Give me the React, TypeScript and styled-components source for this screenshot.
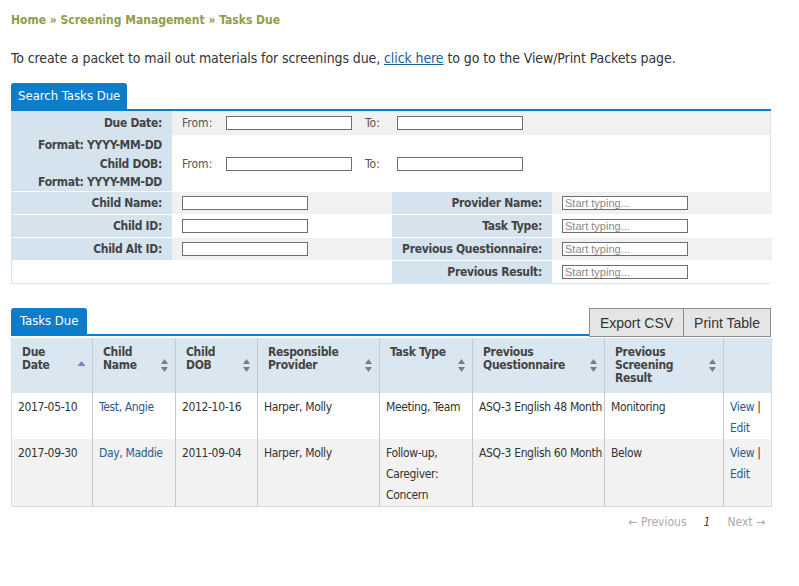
import React from "react";
import styled, { createGlobalStyle } from "styled-components";

const FONT = `Tahoma, "DejaVu Sans Condensed", "DejaVu Sans", sans-serif`;

const Global = createGlobalStyle`
  html, body { margin: 0; padding: 0; background: #fff; }
  body { font-family: ${FONT}; color: #333; }
  * { box-sizing: border-box; }
`;

const Page = styled.div`
  width: 799px;
  padding: 12px 28px 30px 11px;
`;

const Breadcrumb = styled.div`
  font-size: 12px;
  font-weight: bold;
  color: #8e9e48;
  height: 16px;
  line-height: 16px;
`;

const Intro = styled.p`
  margin: 21px 0 0;
  font-size: 14px;
  line-height: 18px;
  color: #333;
  letter-spacing: -0.1px;
`;

const Link = styled.a`
  color: #1f5c99;
  text-decoration: underline;
  cursor: pointer;
`;

const TabRow = styled.div<{ $top: number }>`
  display: flex;
  align-items: flex-start;
  width: 760px;
  margin-top: ${(p) => p.$top}px;
`;

const TabLine = styled.div`
  flex: 1;
  height: 28px;
  border-bottom: 2px solid #0b7dcb;
  display: flex;
`;

const Tab = styled.div<{ $pad: number }>`
  height: 26px;
  line-height: 26px;
  padding: 0 ${(p) => p.$pad}px;
  background: #0b7dcb;
  color: #fff;
  font-size: 13px;
  border-radius: 3px 3px 0 0;
`;

const Search = styled.div`
  border: 1px solid #d8e4ec;
  border-top: none;
  width: 760px;
`;

const DateBlock = styled.div`
  display: grid;
  grid-template-columns: 160px 1fr;
`;

const LabelStack = styled.div`
  background: #d5e3ee;
  display: grid;
  grid-template-rows: 24px 19px 19px 18px;
`;

const Label = styled.div<{ $blank?: boolean }>`
  font-size: 12px;
  font-weight: bold;
  color: #444;
  letter-spacing: -0.3px;
  text-align: right;
  padding-right: 10px;
  display: flex;
  align-items: center;
  justify-content: flex-end;
  background: ${(p) => (p.$blank ? "#fff" : "#d5e3ee")};
`;

const DateStack = styled.div`
  display: grid;
  grid-template-rows: 24px 19px 19px 18px;
`;

const DateLine = styled.div<{ $shade?: boolean }>`
  display: flex;
  align-items: center;
  padding-left: 10px;
  font-size: 12px;
  color: #555;
  background: ${(p) => (p.$shade ? "#f1f1f1" : "#fff")};
`;

const FromLabel = styled.span`
  width: 44px;
`;

const ToLabel = styled.span`
  width: 32px;
  margin-left: 13px;
`;

const TextBox = styled.input`
  width: 126px;
  height: 14px;
  border: 1px solid #6e6e6e;
  padding: 0 2px;
  margin: 0;
  background: #fff;
  font-family: "Liberation Sans", Arial, sans-serif;
  font-size: 11px;
  color: #333;
  outline: none;
  &::placeholder { color: #8a8a8a; }
`;

const FieldRow = styled.div`
  display: grid;
  grid-template-columns: 160px 220px 160px 220px;
  height: 23px;
  border-top: 1px solid #fff;
`;

const FieldCell = styled.div<{ $shade?: boolean }>`
  display: flex;
  align-items: center;
  padding-left: 10px;
  background: ${(p) => (p.$shade ? "#f1f1f1" : "#fff")};
`;

const ToolButtons = styled.div`
  display: flex;
  height: 29px;
`;

const ToolButton = styled.button`
  height: 29px;
  padding: 0 10px;
  background: #e5e5e5;
  border: 1px solid #8c8c8c;
  font-family: "Liberation Sans", Arial, sans-serif;
  font-size: 14px;
  color: #333;
  & + & { border-left: none; }
`;

const Table = styled.table`
  width: 760px;
  border-collapse: collapse;
  table-layout: fixed;
  border: 1px solid #dcdcdc;
  border-top: none;
  margin-top: 1px;
`;

const Th = styled.th<{ $w: number }>`
  width: ${(p) => p.$w}px;
  height: 55px;
  background: #dae7f1;
  text-align: left;
  vertical-align: top;
  padding: 8px 20px 0 10px;
  font-size: 12px;
  line-height: 13px;
  font-weight: bold;
  letter-spacing: -0.3px;
  color: #444;
  border-left: 1px solid #c9c9c9;
  position: relative;
  &:first-child { border-left: none; }
`;

const SortIcon = styled.svg`
  position: absolute;
  right: 6px;
  top: 20px;
`;

const Tr = styled.tr<{ $shade?: boolean }>`
  background: ${(p) => (p.$shade ? "#f2f2f2" : "#fff")};
`;

const Td = styled.td`
  vertical-align: top;
  padding: 4px 4px 0 6px;
  font-size: 12px;
  line-height: 21px;
  letter-spacing: -0.35px;
  white-space: nowrap;
  color: #333;
  border-left: 1px solid #c9c9c9;
  &:first-child { border-left: none; }
`;

const CellLink = styled.a`
  color: #2a5b8c;
  text-decoration: none;
  cursor: pointer;
`;

const Pager = styled.div`
  display: flex;
  justify-content: flex-end;
  align-items: center;
  gap: 17px;
  width: 760px;
  margin-top: 8px;
  padding-right: 6px;
  font-size: 12px;
  color: #aaa;
`;

const PageNum = styled.span`
  font-style: italic;
  color: #444;
`;

const Sort = ({ active }: { active?: boolean }) =>
  active ? (
    <SortIcon width="9" height="15" viewBox="0 0 9 15">
      <path d="M4.5 3 L8.5 8 L0.5 8 Z" fill="#8080d0" />
    </SortIcon>
  ) : (
    <SortIcon width="9" height="15" viewBox="0 0 9 15">
      <path d="M4.5 1 L8 6 L1 6 Z" fill="#7d7d7d" />
      <path d="M4.5 14 L8 9 L1 9 Z" fill="#7d7d7d" />
    </SortIcon>
  );

const columns: { w: number; label: React.ReactNode; active?: boolean; sort?: boolean }[] = [
  { w: 81, label: <>Due<br />Date</>, active: true, sort: true },
  { w: 83, label: <>Child<br />Name</>, sort: true },
  { w: 82, label: <>Child<br />DOB</>, sort: true },
  { w: 122, label: <>Responsible<br />Provider</>, sort: true },
  { w: 93, label: <>Task Type</>, sort: true },
  { w: 132, label: <>Previous<br />Questionnaire</>, sort: true },
  { w: 119, label: <>Previous<br />Screening<br />Result</>, sort: true },
  { w: 48, label: null },
];

const rows = [
  {
    due: "2017-05-10",
    name: "Test, Angie",
    dob: "2012-10-16",
    provider: "Harper, Molly",
    task: <>Meeting, Team</>,
    q: "ASQ-3 English 48 Month",
    result: "Monitoring",
  },
  {
    due: "2017-09-30",
    name: "Day, Maddie",
    dob: "2011-09-04",
    provider: "Harper, Molly",
    task: <>Follow-up,<br />Caregiver:<br />Concern</>,
    q: "ASQ-3 English 60 Month",
    result: "Below",
  },
];

const fieldRows = [
  { l: "Child Name:", r: "Provider Name:", shade: true },
  { l: "Child ID:", r: "Task Type:", shade: false },
  { l: "Child Alt ID:", r: "Previous Questionnaire:", shade: true },
  { l: null, r: "Previous Result:", shade: false },
];

export default function App() {
  return (
    <Page>
      <Global />
      <Breadcrumb>Home » Screening Management » Tasks Due</Breadcrumb>
      <Intro>
        To create a packet to mail out materials for screenings due, <Link>click here</Link> to go to the
        View/Print Packets page.
      </Intro>

      <TabRow $top={16}>
        <TabLine>
          <Tab $pad={7}>Search Tasks Due</Tab>
        </TabLine>
      </TabRow>
      <Search>
        <DateBlock>
          <LabelStack>
            <Label>Due Date:</Label>
            <Label>Format: YYYY-MM-DD</Label>
            <Label>Child DOB:</Label>
            <Label>Format: YYYY-MM-DD</Label>
          </LabelStack>
          <DateStack>
            <DateLine $shade>
              <FromLabel>From:</FromLabel>
              <TextBox />
              <ToLabel>To:</ToLabel>
              <TextBox />
            </DateLine>
            <DateLine />
            <DateLine>
              <FromLabel>From:</FromLabel>
              <TextBox />
              <ToLabel>To:</ToLabel>
              <TextBox />
            </DateLine>
            <DateLine />
          </DateStack>
        </DateBlock>
        {fieldRows.map((f, i) => (
          <FieldRow key={i}>
            <Label $blank={!f.l}>{f.l}</Label>
            <FieldCell $shade={f.shade}>{f.l && <TextBox />}</FieldCell>
            <Label>{f.r}</Label>
            <FieldCell $shade={f.shade}>
              <TextBox placeholder="Start typing..." />
            </FieldCell>
          </FieldRow>
        ))}
      </Search>

      <TabRow $top={24}>
        <TabLine>
          <Tab $pad={9}>Tasks Due</Tab>
        </TabLine>
        <ToolButtons>
          <ToolButton>Export CSV</ToolButton>
          <ToolButton>Print Table</ToolButton>
        </ToolButtons>
      </TabRow>
      <Table>
        <thead>
          <tr>
            {columns.map((c, i) => (
              <Th key={i} $w={c.w}>
                {c.label}
                {c.sort && <Sort active={c.active} />}
              </Th>
            ))}
          </tr>
        </thead>
        <tbody>
          {rows.map((r, i) => (
            <Tr key={i} $shade={i % 2 === 1}>
              <Td>{r.due}</Td>
              <Td>
                <CellLink>{r.name}</CellLink>
              </Td>
              <Td>{r.dob}</Td>
              <Td>{r.provider}</Td>
              <Td>{r.task}</Td>
              <Td>{r.q}</Td>
              <Td>{r.result}</Td>
              <Td>
                <CellLink>View</CellLink> |<br />
                <CellLink>Edit</CellLink>
              </Td>
            </Tr>
          ))}
        </tbody>
      </Table>
      <Pager>
        <span>← Previous</span>
        <PageNum>1</PageNum>
        <span>Next →</span>
      </Pager>
    </Page>
  );
}
